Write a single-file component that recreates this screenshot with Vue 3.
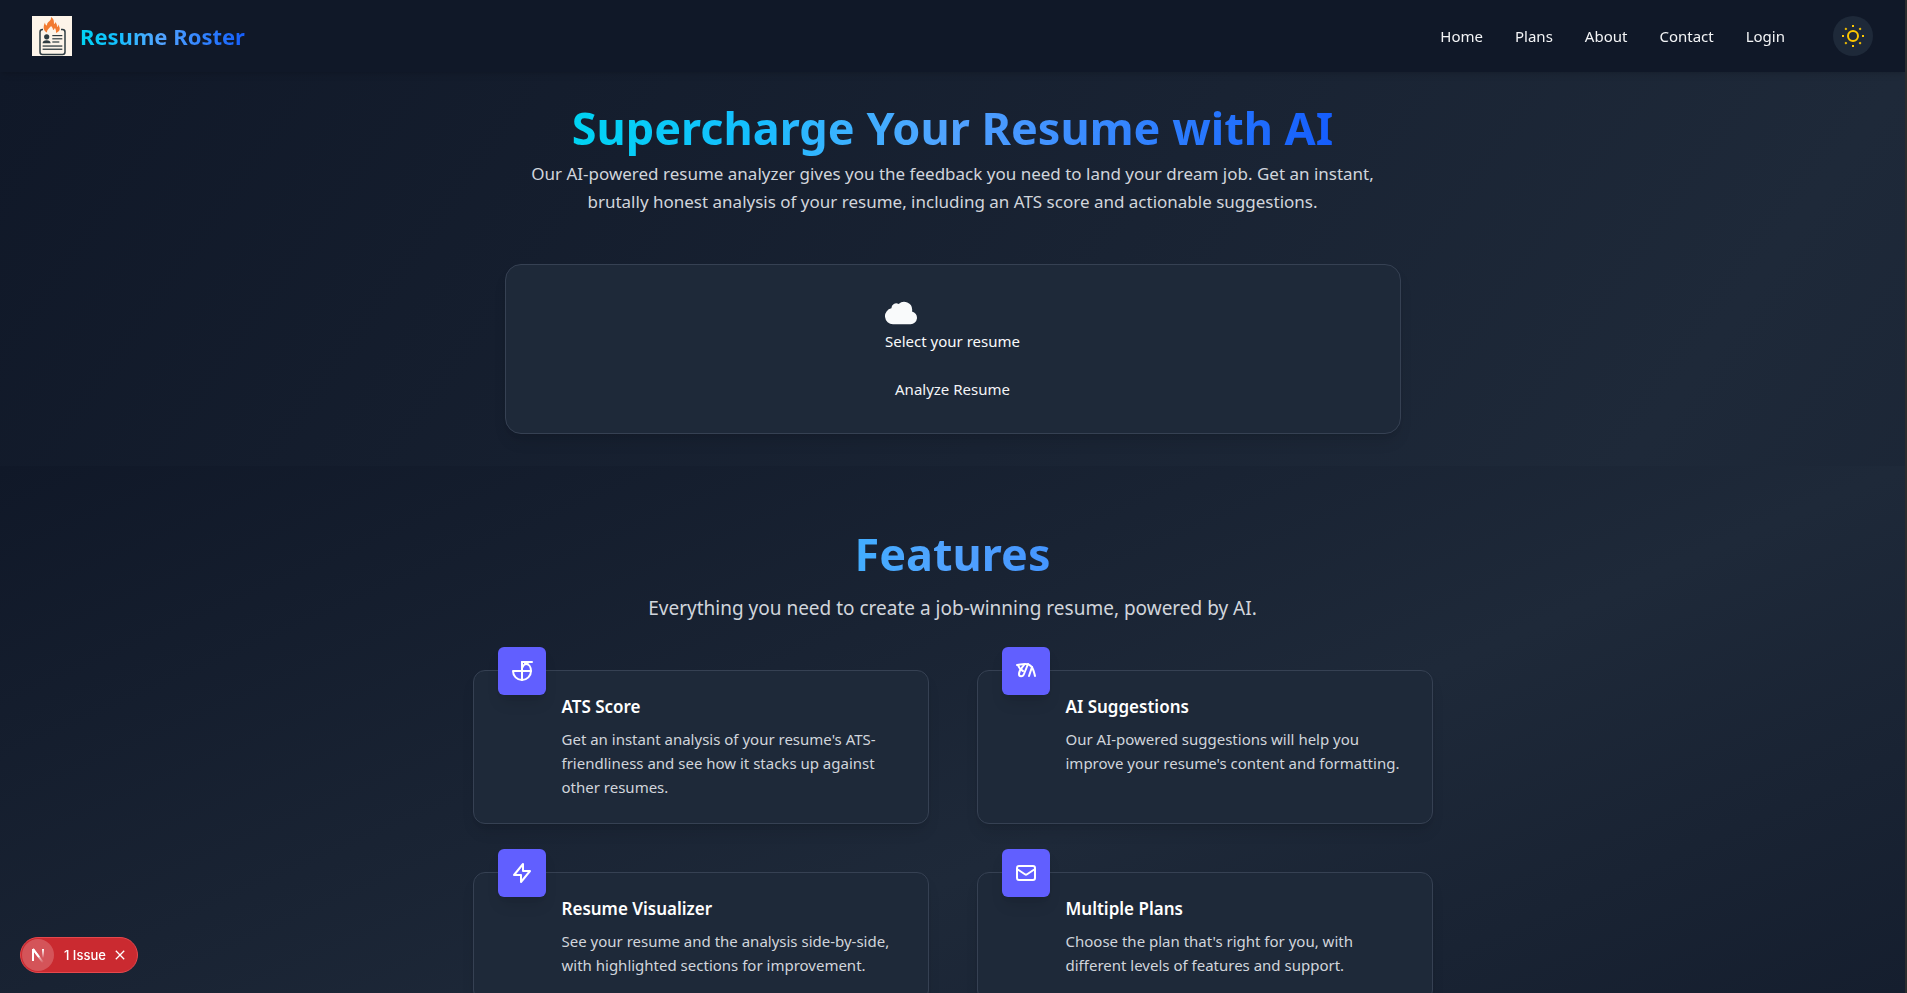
<script setup>
const links = ['Home', 'Plans', 'About', 'Contact', 'Login']

const features = [
  {
    title: 'ATS Score',
    text: "Get an instant analysis of your resume's ATS-friendliness and see how it stacks up against other resumes.",
    paths: ['M3 12a9 9 0 0 0 18 0z', 'M12 3v18', 'M12 3h10', 'M21 12c0-4-2-7-5-7-2 0-3 2-4 4', 'M15 5l4-2'],
  },
  {
    title: 'AI Suggestions',
    text: "Our AI-powered suggestions will help you improve your resume's content and formatting.",
    paths: ['M3 6c3 0 4-1 8-1 6 0 8 3 10 12', 'M4 6c1 3 3 5 5 6', 'M10 6c-2 3-5 5-5 9 0 3 4 3 5 0l4-10', 'M15 17l3-9'],
  },
  {
    title: 'Resume Visualizer',
    text: 'See your resume and the analysis side-by-side, with highlighted sections for improvement.',
    paths: ['M13 10V3L4 14h7v7l9-11h-7z'],
  },
  {
    title: 'Multiple Plans',
    text: "Choose the plan that's right for you, with different levels of features and support.",
    paths: ['M3 8l7.89 5.26a2 2 0 0 0 2.22 0L21 8M5 19h14a2 2 0 0 0 2-2V7a2 2 0 0 0-2-2H5a2 2 0 0 0-2 2v10a2 2 0 0 0 2 2z'],
  },
]

const rays = [0, 45, 90, 135, 180, 225, 270, 315]
</script>

<template>
  <div class="page">
    <header class="topbar">
      <a class="brand" href="#">
        <svg class="logo" viewBox="0 0 40 40" aria-hidden="true">
          <rect width="40" height="40" fill="#fdf4e9" />
          <rect x="8" y="13.5" width="25" height="25" rx="2.5" fill="none" stroke="#2f3c42" stroke-width="1.5" />
          <path d="M11 10h18v5H11z" fill="#fdf4e9" />
          <path d="M15 16.500c-4-2-4-6-2-10 0 2 1 3 2 3 0-3 1-3 3-5 1-1 1-2 1-3.500 3 2 3 4 3 7 1 0 1-1 1-2 2 2 2 3 2 5 1 0 1-1 1-2.500 3 4 2 7-2 8.500 0-2 0-3-1-5-1 1-1 2-2 2 0-2-1-3-2-4-1 2-4 3-4 6.500z" fill="#f27a30" />
          <g fill="#2f3c42">
            <circle cx="14.7" cy="20.8" r="2.6" />
            <path d="M10.6 27.3c0-2 1.6-3 4-3s4 1 4 3z" />
            <rect x="20.3" y="19" width="10" height="1.2" />
            <rect x="20.3" y="22.2" width="10" height="1.2" />
            <rect x="20.3" y="25.4" width="7" height="1.2" />
            <rect x="10.6" y="29.4" width="19.7" height="1.3" />
            <rect x="10.6" y="32.6" width="19.7" height="1.3" />
          </g>
        </svg>
        <span class="brand-name tint">Resume Roster</span>
      </a>
      <div class="actions">
        <nav class="nav">
          <a v-for="l in links" :key="l" href="#">{{ l }}</a>
        </nav>
        <button class="theme" type="button" aria-label="Toggle theme">
          <svg viewBox="0 0 24 24" width="24" height="24" fill="none" stroke="#fdc700" stroke-width="2">
            <circle cx="12" cy="12" r="5" />
            <path v-for="r in rays" :key="r" d="M12 1v2" :transform="`rotate(${r} 12 12)`" />
          </svg>
        </button>
      </div>
    </header>

    <main>
      <section class="hero">
        <h1 class="tint">Supercharge Your Resume with AI</h1>
        <p class="lead">
          Our AI-powered resume analyzer gives you the feedback you need to land your dream job. Get an instant,
          brutally honest analysis of your resume, including an ATS score and actionable suggestions.
        </p>
        <form class="upload" @submit.prevent>
          <label class="picker" for="resume">
            <svg viewBox="0 0 20 20" width="32" height="32" fill="currentColor" aria-hidden="true">
              <path d="M16.88 9.1A4 4 0 0 1 16 17H5a5 5 0 0 1-1-9.9V7a3 3 0 0 1 4.52-2.59A4.98 4.98 0 0 1 17 8c0 .38-.04.74-.12 1.1z" />
            </svg>
            <span>Select your resume</span>
            <input id="resume" class="file" type="file" />
          </label>
          <button class="analyze" type="submit">Analyze Resume</button>
        </form>
      </section>

      <section class="features">
        <div class="wrap">
          <h2 class="tint">Features</h2>
          <p class="sub">Everything you need to create a job-winning resume, powered by AI.</p>
          <div class="grid">
            <article v-for="f in features" :key="f.title" class="card">
              <div class="icon">
                <svg viewBox="0 0 24 24" width="24" height="24" aria-hidden="true">
                  <path v-for="d in f.paths" :key="d" :d="d" />
                </svg>
              </div>
              <h3>{{ f.title }}</h3>
              <p>{{ f.text }}</p>
            </article>
          </div>
        </div>
      </section>
    </main>

    <div class="issue">
      <button class="mark" type="button" aria-label="Open dev tools">
        <svg viewBox="0 0 32 32" width="32" height="32" fill="none" stroke-width="2">
          <defs>
            <linearGradient id="fade-a" gradientUnits="userSpaceOnUse" x1="16" y1="15" x2="22" y2="23">
              <stop stop-color="#fff" />
              <stop offset="1" stop-color="#fff" stop-opacity="0" />
            </linearGradient>
            <linearGradient id="fade-b" gradientUnits="userSpaceOnUse" x1="21" y1="10" x2="21" y2="19">
              <stop stop-color="#fff" />
              <stop offset="1" stop-color="#fff" stop-opacity="0" />
            </linearGradient>
          </defs>
          <path d="M11 22V10" stroke="#fff" />
          <path d="M11 10l10 13.500" stroke="url(#fade-a)" />
          <path d="M11 10l6 8" stroke="#fff" />
          <path d="M21 10v9" stroke="url(#fade-b)" />
        </svg>
      </button>
      <button class="issue-text" type="button">1 Issue</button>
      <button class="close" type="button" aria-label="Dismiss">
        <svg viewBox="0 0 10 10" width="10" height="10" fill="none" stroke="#fff" stroke-width="1.3">
          <path d="M.8.8l8.400 8.400M9.200.8L.8 9.200" />
        </svg>
      </button>
    </div>
  </div>
</template>

<style>
html {
  scrollbar-width: none;
  background: #101828;
}
body {
  margin: 0;
}
</style>

<style scoped>
.page {
  box-sizing: border-box;
  height: 100vh;
  overflow-y: auto;
  scrollbar-width: none;
  border-right: 2px solid #2b2d2e;
  color: #f3f4f6;
  font: 15px/24px "Noto Sans", sans-serif;
}
h1, h2, h3, p {
  margin: 0;
}
a {
  color: inherit;
  text-decoration: none;
}
button {
  padding: 0;
  border: 0;
  background: none;
  color: inherit;
  font: inherit;
  cursor: pointer;
}
svg {
  display: block;
}
.tint {
  background: linear-gradient(to right in oklab, #00d3f2, #16bdff 25%, #51a2ff 50%, #155dfc);
  background-clip: text;
  -webkit-background-clip: text;
  color: transparent;
}
.topbar {
  position: sticky;
  top: 0;
  z-index: 2;
  display: flex;
  align-items: center;
  justify-content: space-between;
  padding: 16px 32px;
  background: #101828;
  box-shadow: 0 4px 6px -1px rgba(0, 0, 0, 0.1), 0 2px 4px -2px rgba(0, 0, 0, 0.1);
}
.brand {
  display: flex;
  align-items: center;
  gap: 8px;
}
.logo {
  width: 40px;
  height: 40px;
}
.brand-name {
  font-size: 22px;
  line-height: 32px;
  font-weight: 700;
}
.actions {
  display: flex;
  align-items: center;
  gap: 48px;
}
.nav {
  display: flex;
  gap: 32px;
}
.theme {
  display: grid;
  place-items: center;
  width: 40px;
  height: 40px;
  border-radius: 50%;
  background: #1e2939;
}
main {
  background: linear-gradient(to bottom right in oklab, #101828, #1e2939, #101828) 0 0 / 100% 2700px no-repeat;
}
.hero {
  display: flex;
  flex-direction: column;
  align-items: center;
  padding: 32px;
  text-align: center;
}
h1, h2 {
  font-size: 45px;
  line-height: 48px;
  font-weight: 700;
}
h1 {
  padding-bottom: 8px;
}
.lead {
  max-width: 896px;
  color: #d1d5dc;
  font-size: 17px;
  line-height: 28px;
}
.upload {
  box-sizing: border-box;
  display: flex;
  flex-direction: column;
  align-items: center;
  gap: 24px;
  width: 100%;
  max-width: 896px;
  margin-top: 48px;
  padding: 32px;
  border: 1px solid #364153;
  border-radius: 16px;
  background: #1e2939;
  box-shadow: 0 10px 15px -3px rgba(0, 0, 0, 0.1), 0 4px 6px -4px rgba(0, 0, 0, 0.1);
}
.picker {
  color: #f9fafb;
  text-align: left;
  cursor: pointer;
}
.picker span {
  display: block;
}
.file {
  position: absolute;
  width: 1px;
  height: 1px;
  margin: 0;
  opacity: 0;
}
.features {
  box-sizing: border-box;
  min-height: 826px;
  padding: 64px 32px;
  background: linear-gradient(to bottom right in oklab, #101828, #1e2939, #101828);
}
.wrap {
  max-width: 960px;
  margin: 0 auto;
  text-align: center;
}
.sub {
  margin-top: 16px;
  color: #d1d5dc;
  font-size: 19px;
  line-height: 28px;
}
.grid {
  display: grid;
  grid-template-columns: 1fr 1fr;
  gap: 48px;
  margin-top: 48px;
  text-align: left;
}
.card {
  position: relative;
  padding: 24px 24px 24px 88px;
  border: 1px solid #364153;
  border-radius: 12px;
  background: #1e2939;
  box-shadow: 0 10px 15px -3px rgba(0, 0, 0, 0.1), 0 4px 6px -4px rgba(0, 0, 0, 0.1);
}
.icon {
  position: absolute;
  top: -24px;
  left: 24px;
  display: grid;
  place-items: center;
  width: 48px;
  height: 48px;
  border-radius: 6px;
  background: #615fff;
  box-shadow: 0 10px 15px -3px rgba(0, 0, 0, 0.1), 0 4px 6px -4px rgba(0, 0, 0, 0.1);
}
.icon svg {
  fill: none;
  stroke: #fff;
  stroke-width: 2;
  stroke-linejoin: round;
  stroke-linecap: round;
}
h3 {
  margin-bottom: 8px;
  color: #fff;
  font-size: 17px;
  line-height: 24px;
  font-weight: 600;
}
.card p {
  color: #d1d5dc;
}
.issue {
  position: fixed;
  left: 20px;
  bottom: 20px;
  z-index: 3;
  display: flex;
  align-items: center;
  padding: 1px 12px 1px 1px;
  border: 1px solid #e5484d;
  border-radius: 18px;
  background: #ca2a30;
  color: #fff;
  font: 500 13px/32px Inter, sans-serif;
}
.mark {
  width: 32px;
  height: 32px;
  border-radius: 50%;
  background: rgba(255, 255, 255, 0.2);
}
.issue-text {
  margin: 0 9px 0 10px;
}
</style>
